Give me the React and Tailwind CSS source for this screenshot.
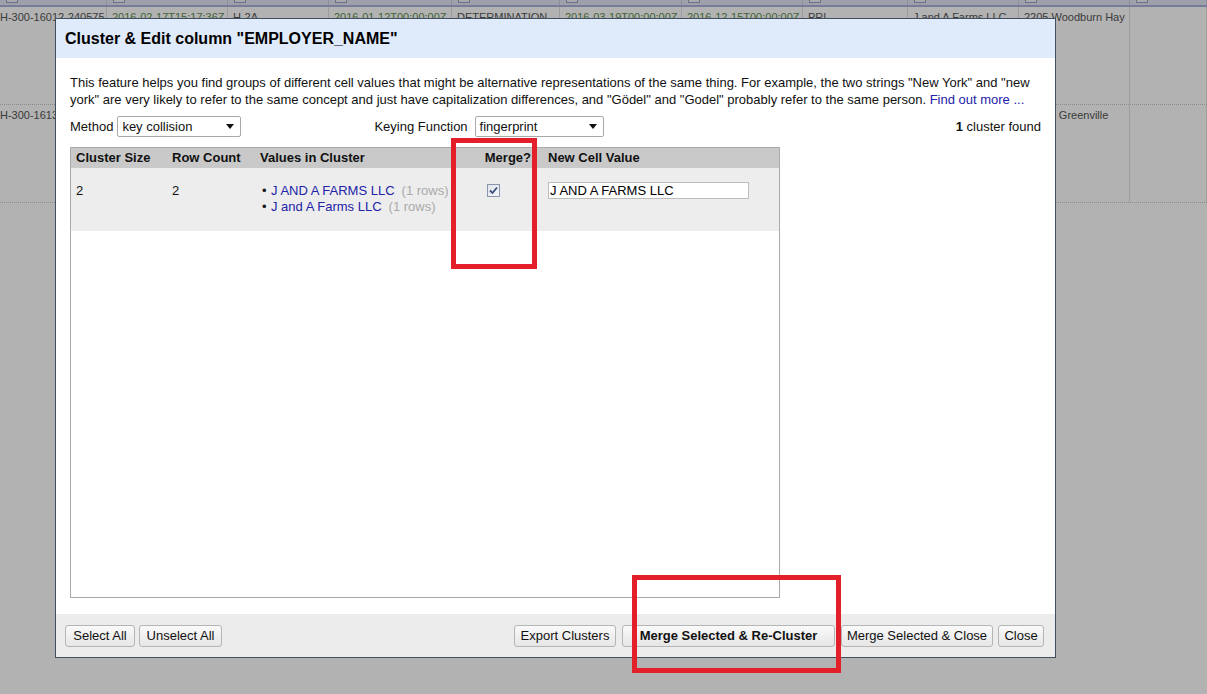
import React from "react";

const cols = [107, 121, 101, 123, 108, 122, 121, 105, 111, 111, 77];

const rowOne = [
  { text: "H-300-16012-240575", pad: "pl-0" },
  { text: "2016-02-17T15:17:36Z", green: true },
  { text: "H-2A" },
  { text: "2016-01-12T00:00:00Z", green: true },
  { text: "DETERMINATION" },
  { text: "2016-03-19T00:00:00Z", green: true },
  { text: "2016-12-15T00:00:00Z", green: true },
  { text: "PRL" },
  { text: "J and A Farms LLC" },
  { text: "2205 Woodburn Hay" },
  { text: "" },
];

const rowTwo = [
  { text: "H-300-16134-250198", pad: "pl-0" },
  { text: "2016-02-19T10:02:11Z", green: true },
  { text: "H-2A" },
  { text: "2016-01-15T00:00:00Z", green: true },
  { text: "DETERMINATION" },
  { text: "2016-03-20T00:00:00Z", green: true },
  { text: "2016-11-30T00:00:00Z", green: true },
  { text: "PRL" },
  { text: "J AND A FARMS LLC" },
  { text: "309 E. Greenville" },
  { text: "" },
];

const BgRow = ({ cells }) => (
  <div className="flex h-[98px] border-b border-dotted border-[#c8c8c8]">
    {cells.map((c, i) => (
      <div
        key={i}
        style={{ width: cols[i] }}
        className={`shrink-0 overflow-hidden whitespace-nowrap border-r border-[#e0e0e0] pt-[3px] text-[11px] leading-[14px] ${
          c.pad || "pl-[5px]"
        } ${c.green ? "text-[#5f8f4f]" : "text-[#555]"}`}
      >
        {c.text}
      </div>
    ))}
  </div>
);

const Button = ({ children, className = "" }) => (
  <button
    className={`h-[22px] rounded-[3px] border border-[#b5b5b5] bg-gradient-to-b from-[#fafafa] to-[#e6e6e6] text-[13px] leading-none text-[#111] ${className}`}
  >
    {children}
  </button>
);

const Select = ({ value, width }) => (
  <div
    className={`flex h-[21px] items-center justify-between rounded-[2px] border border-[#a9a9a9] bg-white pl-[4px] pr-[6px] text-[13px] text-[#111] ${width}`}
  >
    <span>{value}</span>
    <svg width="8" height="5" viewBox="0 0 8 5">
      <path d="M0 0h8L4 5z" fill="#111" />
    </svg>
  </div>
);

const Checkbox = () => (
  <div className="flex h-[13px] w-[13px] items-center justify-center border border-[#8796ad] bg-gradient-to-br from-[#dfe4ec] to-[#f5f7fa]">
    <svg width="9" height="9" viewBox="0 0 9 9">
      <path
        d="M1 4.5 L3.5 7 L8 1.5"
        fill="none"
        stroke="#3c4f7c"
        strokeWidth="1.8"
      />
    </svg>
  </div>
);

export default function App() {
  return (
    <div className="relative h-[694px] w-[1207px] overflow-hidden bg-white font-['Liberation_Sans',Arial,sans-serif]">
      {/* grid behind the dialog */}
      <div className="flex h-[5px] bg-[#e3e7f3]">
        {cols.map((w, i) => (
          <div
            key={i}
            style={{ width: w }}
            className="shrink-0 border-r border-[#c9cfe2] pl-[6px]"
          >
            <div className="h-[3px] w-[12px] border-x border-b border-[#9aa3c5] bg-[#f2f4fa]" />
          </div>
        ))}
      </div>
      <div className="h-[2px] bg-[#aab3db]" />
      <BgRow cells={rowOne} />
      <BgRow cells={rowTwo} />

      {/* modal shade */}
      <div className="absolute inset-0 bg-black/30" />

      {/* dialog */}
      <div className="absolute left-[55px] top-[18px] flex h-[640px] w-[1001px] flex-col border border-[#3f4f60] bg-white text-[#111]">
        <div className="flex h-[39px] shrink-0 items-center bg-[#dfeafb] pl-[9px] text-[16px] font-bold text-black">
          Cluster &amp; Edit column "EMPLOYER_NAME"
        </div>

        <div className="flex flex-1 flex-col px-[14px] pb-[16px] pt-[16px]">
          <p className="text-[13px] leading-[17px] text-[#111]">
            This feature helps you find groups of different cell values that
            might be alternative representations of the same thing. For
            example, the two strings "New York" and "new york" are very likely
            to refer to the same concept and just have capitalization
            differences, and "Gödel" and "Godel" probably refer to the same
            person. <span className="text-[#2323a8]">Find out more ...</span>
          </p>

          <div className="mt-[8px] flex h-[21px] items-center text-[13px]">
            <span className="mr-[4px]">Method</span>
            <Select value="key collision" width="w-[124px]" />
            <span className="ml-[133px] mr-[7px]">Keying Function</span>
            <Select value="fingerprint" width="w-[129px]" />
            <span className="ml-auto">
              <b>1</b> cluster found
            </span>
          </div>

          <div className="mt-[10px] flex">
            <div className="flex h-[451px] w-[710px] flex-col border border-[#aaa]">
              <div className="flex h-[20px] items-center bg-[#c9c9c9] text-[13px] font-bold text-[#111]">
                <div className="w-[96px] pl-[5px]">Cluster Size</div>
                <div className="w-[88px] pl-[5px]">Row Count</div>
                <div className="w-[200px] pl-[5px]">Values in Cluster</div>
                <div className="w-[82px] pr-[6px] text-right">Merge?</div>
                <div className="flex-1 pl-[11px]">New Cell Value</div>
              </div>
              <div className="flex h-[63px] bg-[#ededed] pt-[14px] text-[13px] leading-[16px]">
                <div className="w-[96px] pl-[5px] pt-[1px]">2</div>
                <div className="w-[88px] pl-[5px] pt-[1px]">2</div>
                <div className="w-[200px] overflow-hidden whitespace-nowrap pl-[7px] pt-[1px]">
                  <div className="flex">
                    <span className="w-[9px]">•</span>
                    <span className="text-[#2323a8]">J AND A FARMS LLC</span>
                    <span className="ml-[7px] text-[#aaa]">(1 rows)</span>
                  </div>
                  <div className="flex">
                    <span className="w-[9px]">•</span>
                    <span className="text-[#2323a8]">J and A Farms LLC</span>
                    <span className="ml-[7px] text-[#aaa]">(1 rows)</span>
                  </div>
                </div>
                <div className="w-[82px] pl-[32px] pt-[2px]">
                  <Checkbox />
                </div>
                <div className="flex-1 pl-[11px]">
                  <div className="flex h-[17px] w-[201px] items-center border border-[#bdbdbd] bg-white pl-[1px] text-[13px] text-black">
                    J AND A FARMS LLC
                  </div>
                </div>
              </div>
            </div>
          </div>
        </div>

        <div className="flex h-[43px] shrink-0 items-center bg-[#ececec] pl-[9px] pr-[11px]">
          <div className="flex gap-[4px]">
            <Button className="w-[70px]">Select All</Button>
            <Button className="w-[83px]">Unselect All</Button>
          </div>
          <div className="ml-auto flex gap-[6px]">
            <Button className="w-[102px]">Export Clusters</Button>
            <Button className="w-[213px] font-bold">
              Merge Selected &amp; Re-Cluster
            </Button>
            <Button className="w-[152px]">Merge Selected &amp; Close</Button>
            <Button className="ml-[-1px] w-[46px]">Close</Button>
          </div>
        </div>
      </div>

      {/* red annotation boxes */}
      <div className="absolute left-[451px] top-[138px] h-[131px] w-[86px] border-[5px] border-[#e3202a]" />
      <div className="absolute left-[632px] top-[575px] h-[98px] w-[209px] border-[5px] border-[#e3202a]" />
    </div>
  );
}
